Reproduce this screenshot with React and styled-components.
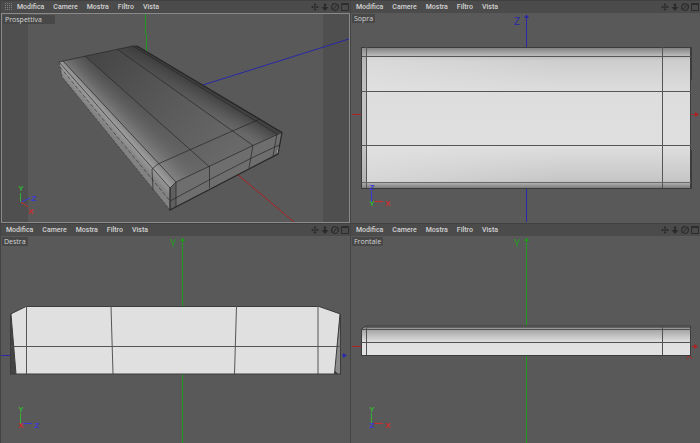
import React, { useState } from "react";
import styled, { createGlobalStyle } from "styled-components";

const menus = ["Modifica", "Camere", "Mostra", "Filtro", "Vista"];

const RED = "#aa2222";
const GREEN = "#229a22";
const BLUE = "#2828a8";

const axisColors = { X: "#cc2e2e", Y: "#34b034", Z: "#3838dc" };

function Gizmo({ x, y, up, right, origin }) {
  return (
    <g>
      <path d={`M${x - 0.5} ${y - 11}V${y}`} stroke={axisColors[up]} />
      <path d={`M${x + 1} ${y - 0.5}H${x + 11}`} stroke={axisColors[right]} />
      <AxisName x={x} y={y - 12} fill={axisColors[up]}>{up}</AxisName>
      <AxisName x={x} y={y + 4} fill={axisColors[origin]}>{origin}</AxisName>
      <AxisName x={x + 16} y={y + 4} fill={axisColors[right]}>{right}</AxisName>
    </g>
  );
}

function Perspective() {
  return (
    <Drawing viewBox="2 14 347 208">
      <defs>
        <linearGradient id="top" gradientUnits="userSpaceOnUse" x1="105" y1="50" x2="225" y2="160">
          <stop offset="0" stopColor="#474747" />
          <stop offset="0.5" stopColor="#595959" />
          <stop offset="1" stopColor="#696969" />
        </linearGradient>
        <linearGradient id="topLeft" gradientUnits="userSpaceOnUse" x1="130" y1="134" x2="152" y2="113">
          <stop offset="0" stopColor="#8c8c8c" stopOpacity="0.8" />
          <stop offset="1" stopColor="#606060" stopOpacity="0" />
        </linearGradient>
        <linearGradient id="topRight" gradientUnits="userSpaceOnUse" x1="210" y1="89" x2="199" y2="107">
          <stop offset="0" stopColor="#343434" stopOpacity="0.85" />
          <stop offset="1" stopColor="#454545" stopOpacity="0" />
        </linearGradient>
        <linearGradient id="side" gradientUnits="userSpaceOnUse" x1="117" y1="119" x2="107" y2="128">
          <stop offset="0" stopColor="#8a8a8a" />
          <stop offset="0.4" stopColor="#9c9c9c" />
          <stop offset="1" stopColor="#828282" />
        </linearGradient>
      </defs>
      <rect x="2" y="14" width="26" height="208" fill="#4f4f4f" />
      <rect x="323" y="14" width="26" height="208" fill="#4f4f4f" />
      <path d="M145.500 14V33L146.500 34V52" stroke={GREEN} fill="none" />
      <path d="M203 85L349 39" stroke={BLUE} />
      <path d="M237 174L294 222" stroke={RED} />

      <path d="M63 61L86 56L133 46L137 46L282 132L277 134L176 182Z" fill="url(#top)" />
      <path d="M63 61L85 56L209 166L176 182Z" fill="url(#topLeft)" />
      <path d="M117 49L133 46L137 46L282 132L253 145Z" fill="url(#topRight)" />
      <path d="M59 62L63 61L176 182L170 188V210L62 77Z" fill="url(#side)" />
      <path d="M170 188L176 182L209 166.500L253 145.500L282 132.500L278 153L170 210Z" fill="#6e6e6e" />
      <path d="M277 152L280 144L278 154Z" fill="#c8c8c8" />
      <path d="M170 188L176 182V207L170 210Z" fill="#5f5f5f" />

      <g stroke="#272727" strokeWidth="0.7" fill="none">
        <path d="M63 61L176 182M85 56L209 166.500M117 49L253 145.500" />
        <path d="M59 62L170 188M152 169L158 164L190.500 149.500L232.500 131L260 119" />
        <path d="M60 67L170 201" strokeDasharray="4 2" strokeOpacity="0.8" />
        <path d="M152 169L153 190M170 201L209 180L249.500 159L279 145" />
        <path d="M176 182V207M209.500 166V188M253 145L249 168M277 134L273 156" />
        <path d="M170 188L176 182L209 166.500L253 145.500L282 132.500" />
        <path d="M59 62L86 56L133 46H137" />
        <path d="M59 62L62 77L170 210" stroke="#3a3a3a" strokeDasharray="3 1" />
        <path d="M133 46L277 134" />
        <path d="M137 46L282 132.500L278 154L170 210V188" strokeWidth="1.200" />
      </g>

      <path d="M20.500 193V202" stroke={axisColors.Y} />
      <path d="M21 202L30 198" stroke={axisColors.Z} />
      <path d="M21 202L28 207" stroke={axisColors.X} />
      <AxisName x="21" y="191" fill={axisColors.Y}>Y</AxisName>
      <AxisName x="34" y="201" fill={axisColors.Z}>Z</AxisName>
      <AxisName x="31" y="214" fill={axisColors.X}>X</AxisName>
    </Drawing>
  );
}

function Top() {
  return (
    <Drawing viewBox="351 13 349 210">
      <defs>
        <linearGradient id="slab" x1="0" y1="0" x2="0" y2="1">
          <stop offset="0" stopColor="#7c7c7c" />
          <stop offset="0.065" stopColor="#bdbdbd" />
          <stop offset="0.1" stopColor="#cecece" />
          <stop offset="0.32" stopColor="#dddddd" />
          <stop offset="0.7" stopColor="#dfdfdf" />
          <stop offset="0.95" stopColor="#c6c6c6" />
          <stop offset="1" stopColor="#7c7c7c" />
        </linearGradient>
        <linearGradient id="glow" x1="0" y1="0" x2="1" y2="0">
          <stop offset="0" stopColor="#e2e2e2" stopOpacity="0.6" />
          <stop offset="0.6" stopColor="#e2e2e2" stopOpacity="0" />
        </linearGradient>
      </defs>
      <path d="M526.500 15V47M526.500 189V222" stroke={BLUE} />
      <path d="M524 18L526.500 14.500L529 18Z" fill={BLUE} />
      <ViewAxis x="517" y="25" fill={BLUE}>Z</ViewAxis>
      <path d="M352 114.500H361M691 114.500H697" stroke={RED} />
      <path d="M695 112L699 114.500L695 117Z" fill={RED} />
      <rect x="362" y="47" width="329" height="141" fill="url(#slab)" />
      <rect x="366" y="57" width="325" height="34" fill="url(#glow)" />
      <rect x="366" y="146" width="325" height="36" fill="url(#glow)" />
      <rect x="362" y="48" width="4" height="139" fill="#999999" opacity="0.4" />
      <g stroke="#3c3c3c" shapeRendering="crispEdges">
        <path d="M361 47.500H691M361.500 47V189M361 188.500H692M690.500 47V189" />
        <path d="M691.500 47V80M691.500 150V189" />
        <path d="M362 56.500H691M362 91.500H691M362 145.500H691M366.500 47V188M662.500 47V188" stroke="#555555" />
        <path d="M362 182.500H691" stroke="#6a6a6a" />
      </g>
      <Gizmo x={372} y={202} up="Z" right="X" origin="Y" />
    </Drawing>
  );
}

function RightSide() {
  return (
    <Drawing viewBox="1 236 349 207">
      <path d="M182.500 240V306M182.500 374V443" stroke={GREEN} />
      <path d="M180 241L182.500 237.500L185 241Z" fill={GREEN} />
      <ViewAxis x="173" y="247" fill={GREEN}>Y</ViewAxis>
      <path d="M1 355.500H10M342 355.500H345" stroke={BLUE} />
      <path d="M343 353L347 355.500L343 358Z" fill={BLUE} />
      <path d="M10 313L17 374H10Z" fill="#444444" />
      <path d="M341 314V374H334Z" fill="#8c8c8c" />
      <path d="M11 314L26 306.500H319L340 314L334.500 374H16Z" fill="#e0e0e0" />
      <path d="M334 374L335 371L338 374Z" fill="#333333" />
      <g stroke="#3c3c3c" fill="none">
        <path d="M10.500 374.500V314L26 306.500H319L340.500 314V374.500" />
        <path d="M11 346.500H341M26.500 306V374M318 306V374" stroke="#555555" />
        <path d="M111 306L113 374M236.500 306L234.500 374" stroke="#555555" />
        <path d="M11 314L16 374M340 314L334.500 374" />
        <path d="M10 374H341" />
      </g>
      <Gizmo x={21} y={424} up="Y" right="Z" origin="X" />
    </Drawing>
  );
}

function Front() {
  return (
    <Drawing viewBox="351 236 349 207">
      <defs>
        <linearGradient id="edge" x1="0" y1="0" x2="0" y2="1">
          <stop offset="0" stopColor="#606060" />
          <stop offset="0.1" stopColor="#a0a0a0" />
          <stop offset="0.5" stopColor="#d8d8d8" />
          <stop offset="0.6" stopColor="#e0e0e0" />
          <stop offset="1" stopColor="#e2e2e2" />
        </linearGradient>
      </defs>
      <path d="M526.500 239V326M526.500 355V443" stroke={GREEN} />
      <path d="M524 241L526.500 237.500L529 241Z" fill={GREEN} />
      <ViewAxis x="517" y="247" fill={GREEN}>Y</ViewAxis>
      <path d="M352 346.500H361M692 346.500H696" stroke={RED} />
      <path d="M694 344L698 346.500L694 349Z" fill={RED} />
      <path d="M687 359L689.500 355L692 359" stroke={RED} fill="none" />
      <path d="M362 329L366 326H691V355H362Z" fill="url(#edge)" />
      <g stroke="#3c3c3c" fill="none">
        <path d="M361.500 355V329L366 326H690.500V355.500H361" />
        <path d="M366 327.500H690" strokeWidth="0.500" />
        <path d="M362 329.500H691M362 342.500H691M366.500 326V355M662.500 326V355" stroke="#505050" />
      </g>
      <Gizmo x={372} y={424} up="Y" right="X" origin="Z" />
    </Drawing>
  );
}

function PanIcon() {
  return (
    <svg width="8" height="8" viewBox="0 0 8 8" fill="currentColor">
      <path d="M4 0L5.600 2H2.400ZM4 8L2.400 6H5.600ZM0 4L2 2.400V5.600ZM8 4L6 5.600V2.400Z" />
      <path d="M3.500 1.500H4.500V3.500H6.500V4.500H4.500V6.500H3.500V4.500H1.500V3.500H3.500Z" />
    </svg>
  );
}

function ZoomIcon() {
  return (
    <svg width="8" height="8" viewBox="0 0 8 8" fill="currentColor">
      <path d="M4 0L6 2H5V4H7.500L4 8L0.500 4H3V2H2Z" />
    </svg>
  );
}

function RotateIcon() {
  return (
    <svg width="8" height="8" viewBox="0 0 8 8" fill="none" stroke="currentColor" strokeWidth="1.200">
      <path d="M2.600 7.100A3.400 3.400 0 0 1 4.800 0.700M5.400 0.900A3.400 3.400 0 0 1 3.200 7.300" />
      <path d="M3.400 4.400L5.600 1.800M4.600 3.800L2.400 6.200" strokeWidth="1" />
    </svg>
  );
}

function MaximizeIcon() {
  return (
    <svg width="8" height="8" viewBox="0 0 8 8" fill="none" stroke="currentColor">
      <path d="M0.500 0.500H7.500V7.500H0.500Z" />
      <path d="M0 1.500H8" />
    </svg>
  );
}

function GripIcon() {
  return (
    <svg width="8" height="8" viewBox="0 0 8 8" fill="#808080">
      {[0, 2, 4, 6].map((y) =>
        [0, 2, 4, 6].map((x) => <rect key={`${x}-${y}`} x={x} y={y} width="1" height="1" />)
      )}
    </svg>
  );
}

const views = [
  { name: "Prospettiva", Scene: Perspective, grip: true },
  { name: "Sopra", Scene: Top },
  { name: "Destra", Scene: RightSide },
  { name: "Frontale", Scene: Front },
];

const tools = [
  { label: "Sposta", Icon: PanIcon },
  { label: "Zoom", Icon: ZoomIcon },
  { label: "Ruota", Icon: RotateIcon },
  { label: "Ingrandisci", Icon: MaximizeIcon },
];

function App() {
  const [active, setActive] = useState("Prospettiva");

  return (
    <>
      <GlobalStyle />
      <Workspace>
        {views.map(({ name, Scene, grip }) => (
          <Pane key={name} aria-label={name} onClick={() => setActive(name)}>
            <MenuBar>
              {grip && <GripIcon />}
              <Menus>
                {menus.map((menu) => (
                  <MenuButton key={menu} type="button">{menu}</MenuButton>
                ))}
              </Menus>
              <Tools>
                {tools.map(({ label, Icon }) => (
                  <ToolButton key={label} type="button" aria-label={label}>
                    <Icon />
                  </ToolButton>
                ))}
              </Tools>
            </MenuBar>
            <Viewport $active={active === name}>
              <ViewName $wide={grip}>{name}</ViewName>
              <Scene />
            </Viewport>
          </Pane>
        ))}
      </Workspace>
    </>
  );
}

const GlobalStyle = createGlobalStyle`
  * {
    box-sizing: border-box;
  }
  body {
    margin: 0;
    background: #595959;
    font-family: Roboto, "Open Sans", sans-serif;
  }
`;

const Workspace = styled.main`
  display: grid;
  grid-template-columns: 1fr 1fr;
  grid-template-rows: 223fr 220fr;
  min-height: 100vh;
`;

const Pane = styled.section`
  display: flex;
  flex-direction: column;
  min-width: 0;
  border-left: 1px solid #434343;
`;

const MenuBar = styled.header`
  display: flex;
  align-items: center;
  height: 13px;
  padding: 0 0 0 4px;
  background: #4b4b4b;
  border-top: 1px solid #404040;
`;

const Menus = styled.nav`
  display: flex;
  gap: 9px;
  flex: 1;
  padding-left: 1px;

  svg + & {
    padding-left: 4px;
  }
`;

const MenuButton = styled.button`
  padding: 0;
  border: none;
  background: none;
  color: #d2d2d2;
  font-family: inherit;
  font-size: 7px;
  font-weight: 500;
  line-height: 12px;
`;

const Tools = styled.div`
  display: flex;
`;

const ToolButton = styled.button`
  display: flex;
  align-items: center;
  justify-content: center;
  width: 10px;
  height: 12px;
  padding: 0;
  border: none;
  background: none;
  color: #2c2c2c;
`;

const Viewport = styled.div`
  position: relative;
  flex: 1;
  display: flex;
  min-height: 0;
  background: #595959;
  border: ${(props) => (props.$active ? "1px solid #8a8a8a" : "none")};
`;

const ViewName = styled.h2`
  position: absolute;
  top: 1px;
  left: 1px;
  min-width: ${(props) => (props.$wide ? "52px" : "0")};
  margin: 0;
  padding: 0 2px;
  border-radius: 1px;
  background: #484848;
  color: #d4d4d4;
  font-family: "Open Sans", "Noto Sans", sans-serif;
  font-size: 7px;
  font-weight: 400;
  line-height: 9px;
`;

const Drawing = styled.svg`
  display: block;
  width: 100%;
  height: 100%;
`;

const AxisName = styled.text`
  font-family: "Liberation Sans", sans-serif;
  font-size: 8px;
  font-weight: 700;
  text-anchor: middle;
`;

const ViewAxis = styled.text`
  font-family: "Liberation Sans", sans-serif;
  font-size: 10px;
  text-anchor: middle;
`;

export default App;
